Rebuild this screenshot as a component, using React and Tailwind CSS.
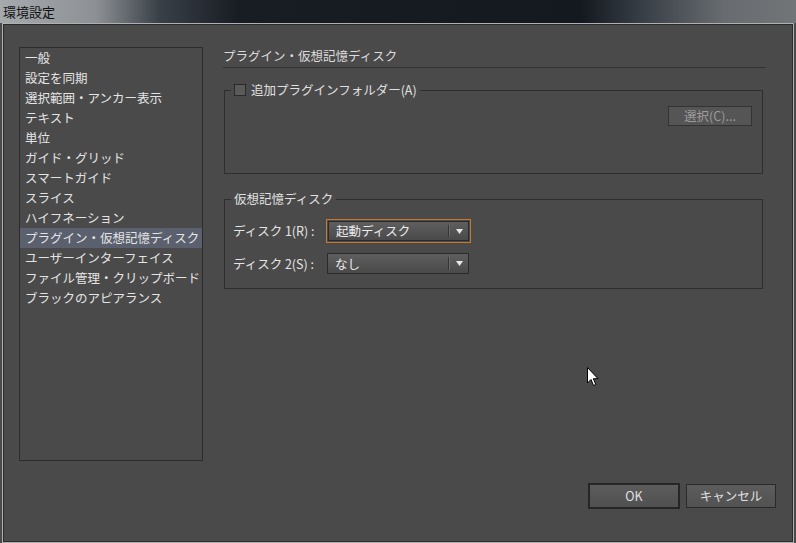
import React from "react";

const items = [
  "一般",
  "設定を同期",
  "選択範囲・アンカー表示",
  "テキスト",
  "単位",
  "ガイド・グリッド",
  "スマートガイド",
  "スライス",
  "ハイフネーション",
  "プラグイン・仮想記憶ディスク",
  "ユーザーインターフェイス",
  "ファイル管理・クリップボード",
  "ブラックのアピアランス",
];

function Select({ value, active, w, h }) {
  return (
    <div
      className={
        "flex items-stretch " +
        (active ? "border border-[#c8782c] p-px" : "border border-[#2a2a2a]")
      }
      style={{ width: w, height: h }}
    >
      <div
        className={
          "flex flex-1 items-stretch bg-[linear-gradient(180deg,#5e5e5e,#4a4a4a)] " +
          (active ? "border border-[#2a2a2a]" : "")
        }
      >
        <div className="flex flex-1 items-center pl-[7px] text-[#ececec]">{value}</div>
        <div className="my-[3px] w-px bg-[#353535]" />
        <div className="my-[3px] w-px bg-[#6a6a6a]" />
        <div className="flex w-[18px] items-center justify-center">
          <svg width="7" height="5" viewBox="0 0 7 5">
            <path d="M0 0 H7 L3.5 5 Z" fill="#e8e8e8" />
          </svg>
        </div>
      </div>
    </div>
  );
}

export default function App() {
  return (
    <div
      className="relative flex h-[543px] w-[796px] flex-col overflow-hidden bg-[#4a4a4a] text-[12.5px] leading-[16px]"
      style={{ fontFamily: '"Noto Sans CJK JP", "Noto Sans", sans-serif' }}
    >
      <div className="flex h-[23px] items-center bg-[linear-gradient(90deg,#a6aaad_0%,#8d9195_12%,#3a4048_20%,#181d24_30%,#141920_73%,#3a4048_81%,#686c70_91%,#717578_100%)] pl-[3px] text-[13px] text-[#111]">
        環境設定
      </div>
      <div className="mx-[2px] flex flex-1 border border-[#aeb0b2]">
        <div className="flex flex-1 flex-col border border-[#2b2b2b] bg-[#4a4a4a] pl-[15px] pr-[15px] pt-[22px]">
          <div className="flex gap-[20px]">
            <div className="h-[414px] w-[184px] border border-[#2c2c2c] pt-0">
              {items.map((t, i) => (
                <div
                  key={t}
                  className={
                    "flex h-[20px] items-center pl-[5px] text-[#e4e4e4] " +
                    (i === 9 ? "bg-[#5a606d]" : "")
                  }
                >
                  {t}
                </div>
              ))}
            </div>
            <div className="flex w-[543px] flex-col">
              <div className="border-b border-[#333] pb-[4px] pt-[1px] leading-[15px] text-[#dcdcdc]">
                プラグイン・仮想記憶ディスク
              </div>
              <fieldset className="mt-[14px] h-[92px] w-[539px] ml-px border border-[#2e2e2e]">
                <legend className="ml-[6px] flex items-center px-[3px] text-[#e0e0e0]">
                  <span className="mr-[5px] h-[12px] w-[12px] border border-[#2a2a2a] bg-[#5a5a5a]" />
                  追加プラグインフォルダー(A)
                </legend>
                <div className="flex justify-end pr-[10px] pt-[8px]">
                  <div className="flex h-[20px] w-[84px] items-center justify-center border border-[#333] bg-[#555] text-[#9c9c9c]">
                    選択(C)...
                  </div>
                </div>
              </fieldset>
              <fieldset className="ml-px mt-[17px] h-[98px] w-[539px] border border-[#2e2e2e]">
                <legend className="ml-[6px] px-[3px] text-[#e0e0e0]">仮想記憶ディスク</legend>
                <div className="flex flex-col pl-[8px] pt-[12px]">
                  <div className="flex items-center">
                    <span className="w-[93px] text-[#e4e4e4]">ディスク 1(R) :</span>
                    <Select value="起動ディスク" active w={145} h={24} />
                  </div>
                  <div className="mt-[10px] flex items-center">
                    <span className="w-[94px] text-[#e4e4e4]">ディスク 2(S) :</span>
                    <Select value="なし" w={142} h={21} />
                  </div>
                </div>
              </fieldset>
            </div>
          </div>
          <div className="mt-[22px] flex justify-end gap-[6px] pr-px">
            <div className="flex h-[26px] w-[92px] items-center justify-center border-2 border-[#262626] bg-[linear-gradient(180deg,#5c5c5c,#505050)] text-[#e0e0e0]">
              OK
            </div>
            <div className="mt-px flex h-[24px] w-[90px] items-center justify-center border border-[#2a2a2a] bg-[linear-gradient(180deg,#5c5c5c,#525252)] text-[#e0e0e0]">
              キャンセル
            </div>
          </div>
        </div>
      </div>
      <svg
        className="absolute left-[587px] top-[367px]"
        width="12"
        height="20"
        viewBox="0 0 12 20"
      >
        <path
          d="M0.5 0.5 V16 L4 12.5 L6.5 18.5 L8.8 17.5 L6.3 11.7 H11 Z"
          fill="#fff"
          stroke="#000"
          strokeWidth="1"
          strokeLinejoin="round"
        />
      </svg>
    </div>
  );
}
